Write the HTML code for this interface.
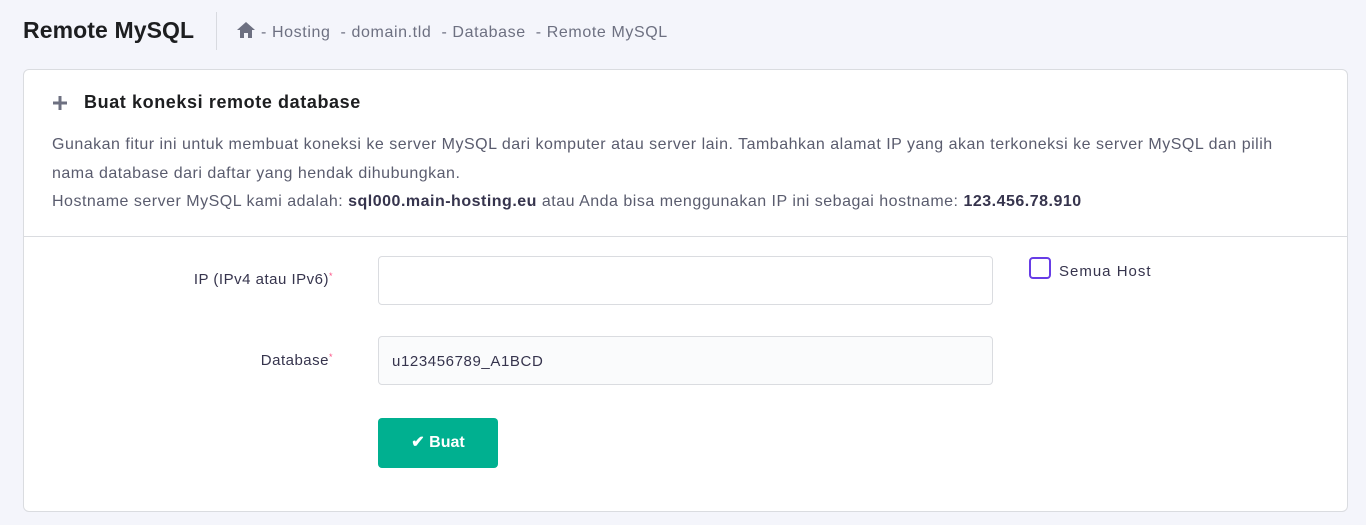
<!DOCTYPE html>
<html><head><meta charset="utf-8"><style>
*{box-sizing:border-box;margin:0;padding:0}
body{width:1366px;height:525px;background:#f4f5fb;font-family:"Liberation Sans",sans-serif;color:#36344d;position:relative;overflow:hidden}
.a{position:absolute}
h1{position:absolute;left:23px;top:17px;font-size:23px;font-weight:700;color:#1d1e20;letter-spacing:0.1px}
.sep{left:216px;top:12px;width:1px;height:38px;background:#d8dae0}
.bc{left:236px;top:21px;font-size:16px;color:#6d7081;white-space:nowrap;letter-spacing:0.6px}
.card{left:23px;top:69px;width:1325px;height:443px;background:#fff;border:1px solid #dadce0;border-radius:6px}
.t{left:84px;top:92px;font-size:18px;font-weight:700;color:#1d1e20;letter-spacing:0.6px}
.p{left:52px;top:131px;font-size:16px;letter-spacing:0.5px;line-height:28.5px;color:#5a5c6e;width:1300px;white-space:nowrap}
.p b{color:#36344d}
.hr{left:24px;top:236px;width:1323px;height:1px;background:#dadce0}
.lbl{font-size:15px;color:#36344d;text-align:right;width:200px;letter-spacing:0.5px}
.lbl sup{color:#fc5185;font-size:9px;vertical-align:top}
.in{left:378px;width:615px;height:49px;border:1px solid #dadce0;border-radius:4px;background:#fff;font-size:15px;padding:16px 0 0 13px;color:#36344d;letter-spacing:0.6px}
.btn{left:378px;top:418px;width:120px;height:50px;background:#00b090;border-radius:4px;color:#fff;font-weight:700;font-size:16px;text-align:center;line-height:50px}
.cb{left:1029px;top:257px;width:22px;height:22px;border:2px solid #673de6;border-radius:4px}
</style></head><body>
<h1>Remote MySQL</h1>
<div class="a sep"></div>
<div class="a bc"><svg width="20" height="18" viewBox="0 0 20 18" style="vertical-align:-2px"><path d="M10 1 L1 9 H4 V17 H8 V12 H12 V17 H16 V9 H19 Z" fill="#6d7081"/></svg> - Hosting &nbsp;- domain.tld &nbsp;- Database &nbsp;- Remote MySQL</div>
<div class="a card"></div>
<svg class="a" style="left:52px;top:95px" width="16" height="16" viewBox="0 0 16 16"><path d="M8 1V15M1 8H15" stroke="#6d7081" stroke-width="3"/></svg>
<div class="a t">Buat koneksi remote database</div>
<div class="a p">Gunakan fitur ini untuk membuat koneksi ke server MySQL dari komputer atau server lain. Tambahkan alamat IP yang akan terkoneksi ke server MySQL dan pilih<br>nama database dari daftar yang hendak dihubungkan.<br>Hostname server MySQL kami adalah: <b>sql000.main-hosting.eu</b> atau Anda bisa menggunakan IP ini sebagai hostname: <b>123.456.78.910</b></div>
<div class="a hr"></div>
<div class="a lbl" style="left:133px;top:271px">IP (IPv4 atau IPv6)<sup>*</sup></div>
<div class="a in" style="top:256px"></div>
<div class="a cb"></div>
<div class="a" style="left:1059px;top:263px;font-size:15px;letter-spacing:1px">Semua Host</div>
<div class="a lbl" style="left:133px;top:352px">Database<sup>*</sup></div>
<div class="a in" style="top:336px;background:#fafbfc">u123456789_A1BCD</div>
<div class="a btn">✔ Buat</div>
</body></html>
